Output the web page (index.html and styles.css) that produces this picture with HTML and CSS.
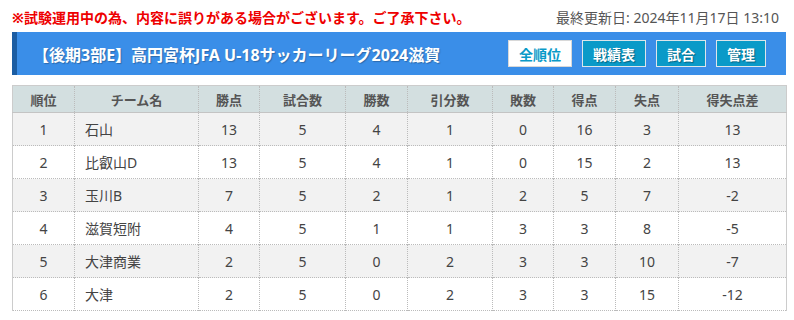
FILE: index.html
```html
<!DOCTYPE html>
<html lang="ja">
<head>
<meta charset="utf-8">
<link rel="stylesheet" href="styles.css">
</head>
<body>
<div class="page">
  <div class="topline">
    <span class="notice">※試験運用中の為、内容に誤りがある場合がございます。ご了承下さい。</span>
    <span class="updated">最終更新日: 2024年11月17日 13:10</span>
  </div>
  <div class="titlebar">
    <h1 class="title">【後期3部E】高円宮杯JFA U-18サッカーリーグ2024滋賀</h1>
    <div class="btns">
      <a class="btn active">全順位</a>
      <a class="btn">戦績表</a>
      <a class="btn">試合</a>
      <a class="btn">管理</a>
    </div>
  </div>
  <table class="standings">
    <colgroup>
      <col class="c1"><col class="c2"><col class="c3"><col class="c4"><col class="c5">
      <col class="c6"><col class="c7"><col class="c8"><col class="c9"><col class="c10">
    </colgroup>
    <thead>
      <tr><th>順位</th><th>チーム名</th><th>勝点</th><th>試合数</th><th>勝数</th><th>引分数</th><th>敗数</th><th>得点</th><th>失点</th><th>得失点差</th></tr>
    </thead>
    <tbody>
      <tr><td>1</td><td class="team">石山</td><td>13</td><td>5</td><td>4</td><td>1</td><td>0</td><td>16</td><td>3</td><td>13</td></tr>
      <tr><td>2</td><td class="team">比叡山D</td><td>13</td><td>5</td><td>4</td><td>1</td><td>0</td><td>15</td><td>2</td><td>13</td></tr>
      <tr><td>3</td><td class="team">玉川B</td><td>7</td><td>5</td><td>2</td><td>1</td><td>2</td><td>5</td><td>7</td><td>-2</td></tr>
      <tr><td>4</td><td class="team">滋賀短附</td><td>4</td><td>5</td><td>1</td><td>1</td><td>3</td><td>3</td><td>8</td><td>-5</td></tr>
      <tr><td>5</td><td class="team">大津商業</td><td>2</td><td>5</td><td>0</td><td>2</td><td>3</td><td>3</td><td>10</td><td>-7</td></tr>
      <tr><td>6</td><td class="team">大津</td><td>2</td><td>5</td><td>0</td><td>2</td><td>3</td><td>3</td><td>15</td><td>-12</td></tr>
    </tbody>
  </table>
</div>
</body>
</html>
```
FILE: styles.css
```css
html, body {
  margin: 0;
  padding: 0;
  background: #fff;
}
body {
  font-family: "Noto Sans", "Noto Sans CJK JP", sans-serif;
  color: #333;
}
.page {
  width: 774px;
  margin-left: 12px;
}
.topline {
  display: flex;
  justify-content: space-between;
  align-items: center;
  height: 22px;
  margin-top: 6px;
}
.notice {
  color: #ee0000;
  font-weight: bold;
  font-size: 14px;
}
.updated {
  color: #555;
  font-size: 14px;
  margin-right: 7px;
}
.titlebar {
  display: flex;
  align-items: center;
  justify-content: space-between;
  height: 43px;
  margin-top: 4px;
  background: #3a8ee8;
  border-left: 5px solid #1b5da3;
  box-sizing: border-box;
  padding: 0 20px 0 16px;
}
.title {
  margin: 0;
  color: #fff;
  font-size: 16px;
  font-weight: bold;
  text-shadow: 1px 1px 1px rgba(0,0,0,0.25);
}
.btns {
  display: flex;
  gap: 10px;
}
.btn {
  display: flex;
  align-items: center;
  justify-content: center;
  height: 27px;
  box-sizing: border-box;
  padding: 0 10px;
  background: #0a9ac8;
  border: 1px solid #dde6ea;
  color: #fff;
  font-weight: bold;
  font-size: 14px;
  text-shadow: 1px 1px 1px rgba(0,0,0,0.35);
}
.btn.active {
  background: #fff;
  color: #0a9ac8;
  text-shadow: none;
  border-color: #d8d8d8;
}
.standings {
  margin-top: 10px;
  width: 774px;
  border-collapse: collapse;
  table-layout: fixed;
  border: 1px solid #cccccc;
  border-bottom: 1px dotted #bbb;
  font-size: 14px;
}
.c1 { width: 62px; }
.c2 { width: 124px; }
.c3 { width: 61px; }
.c4 { width: 86px; }
.c5 { width: 62px; }
.c6 { width: 85px; }
.c7 { width: 61px; }
.c8 { width: 62px; }
.c9 { width: 63px; }
.c10 { width: 108px; }
.standings th {
  height: 26px;
  padding: 0;
  background: #d3dfe0;
  color: #555;
  font-weight: bold;
  font-size: 13px;
  border-left: 1px dotted #bbb;
  border-bottom: 1px solid #c4c4c4;
}
.standings td {
  height: 32px;
  padding: 0;
  text-align: center;
  color: #444;
  border-left: 1px dotted #bbb;
  border-top: 1px dotted #bbb;
}
.standings th:first-child,
.standings td:first-child {
  border-left: none;
}
.standings td.team {
  text-align: left;
  padding-left: 10px;
}
.standings tbody tr:nth-child(odd) td {
  background: #f2f2f2;
}
.standings tbody tr:nth-child(even) td {
  background: #fff;
}
```
